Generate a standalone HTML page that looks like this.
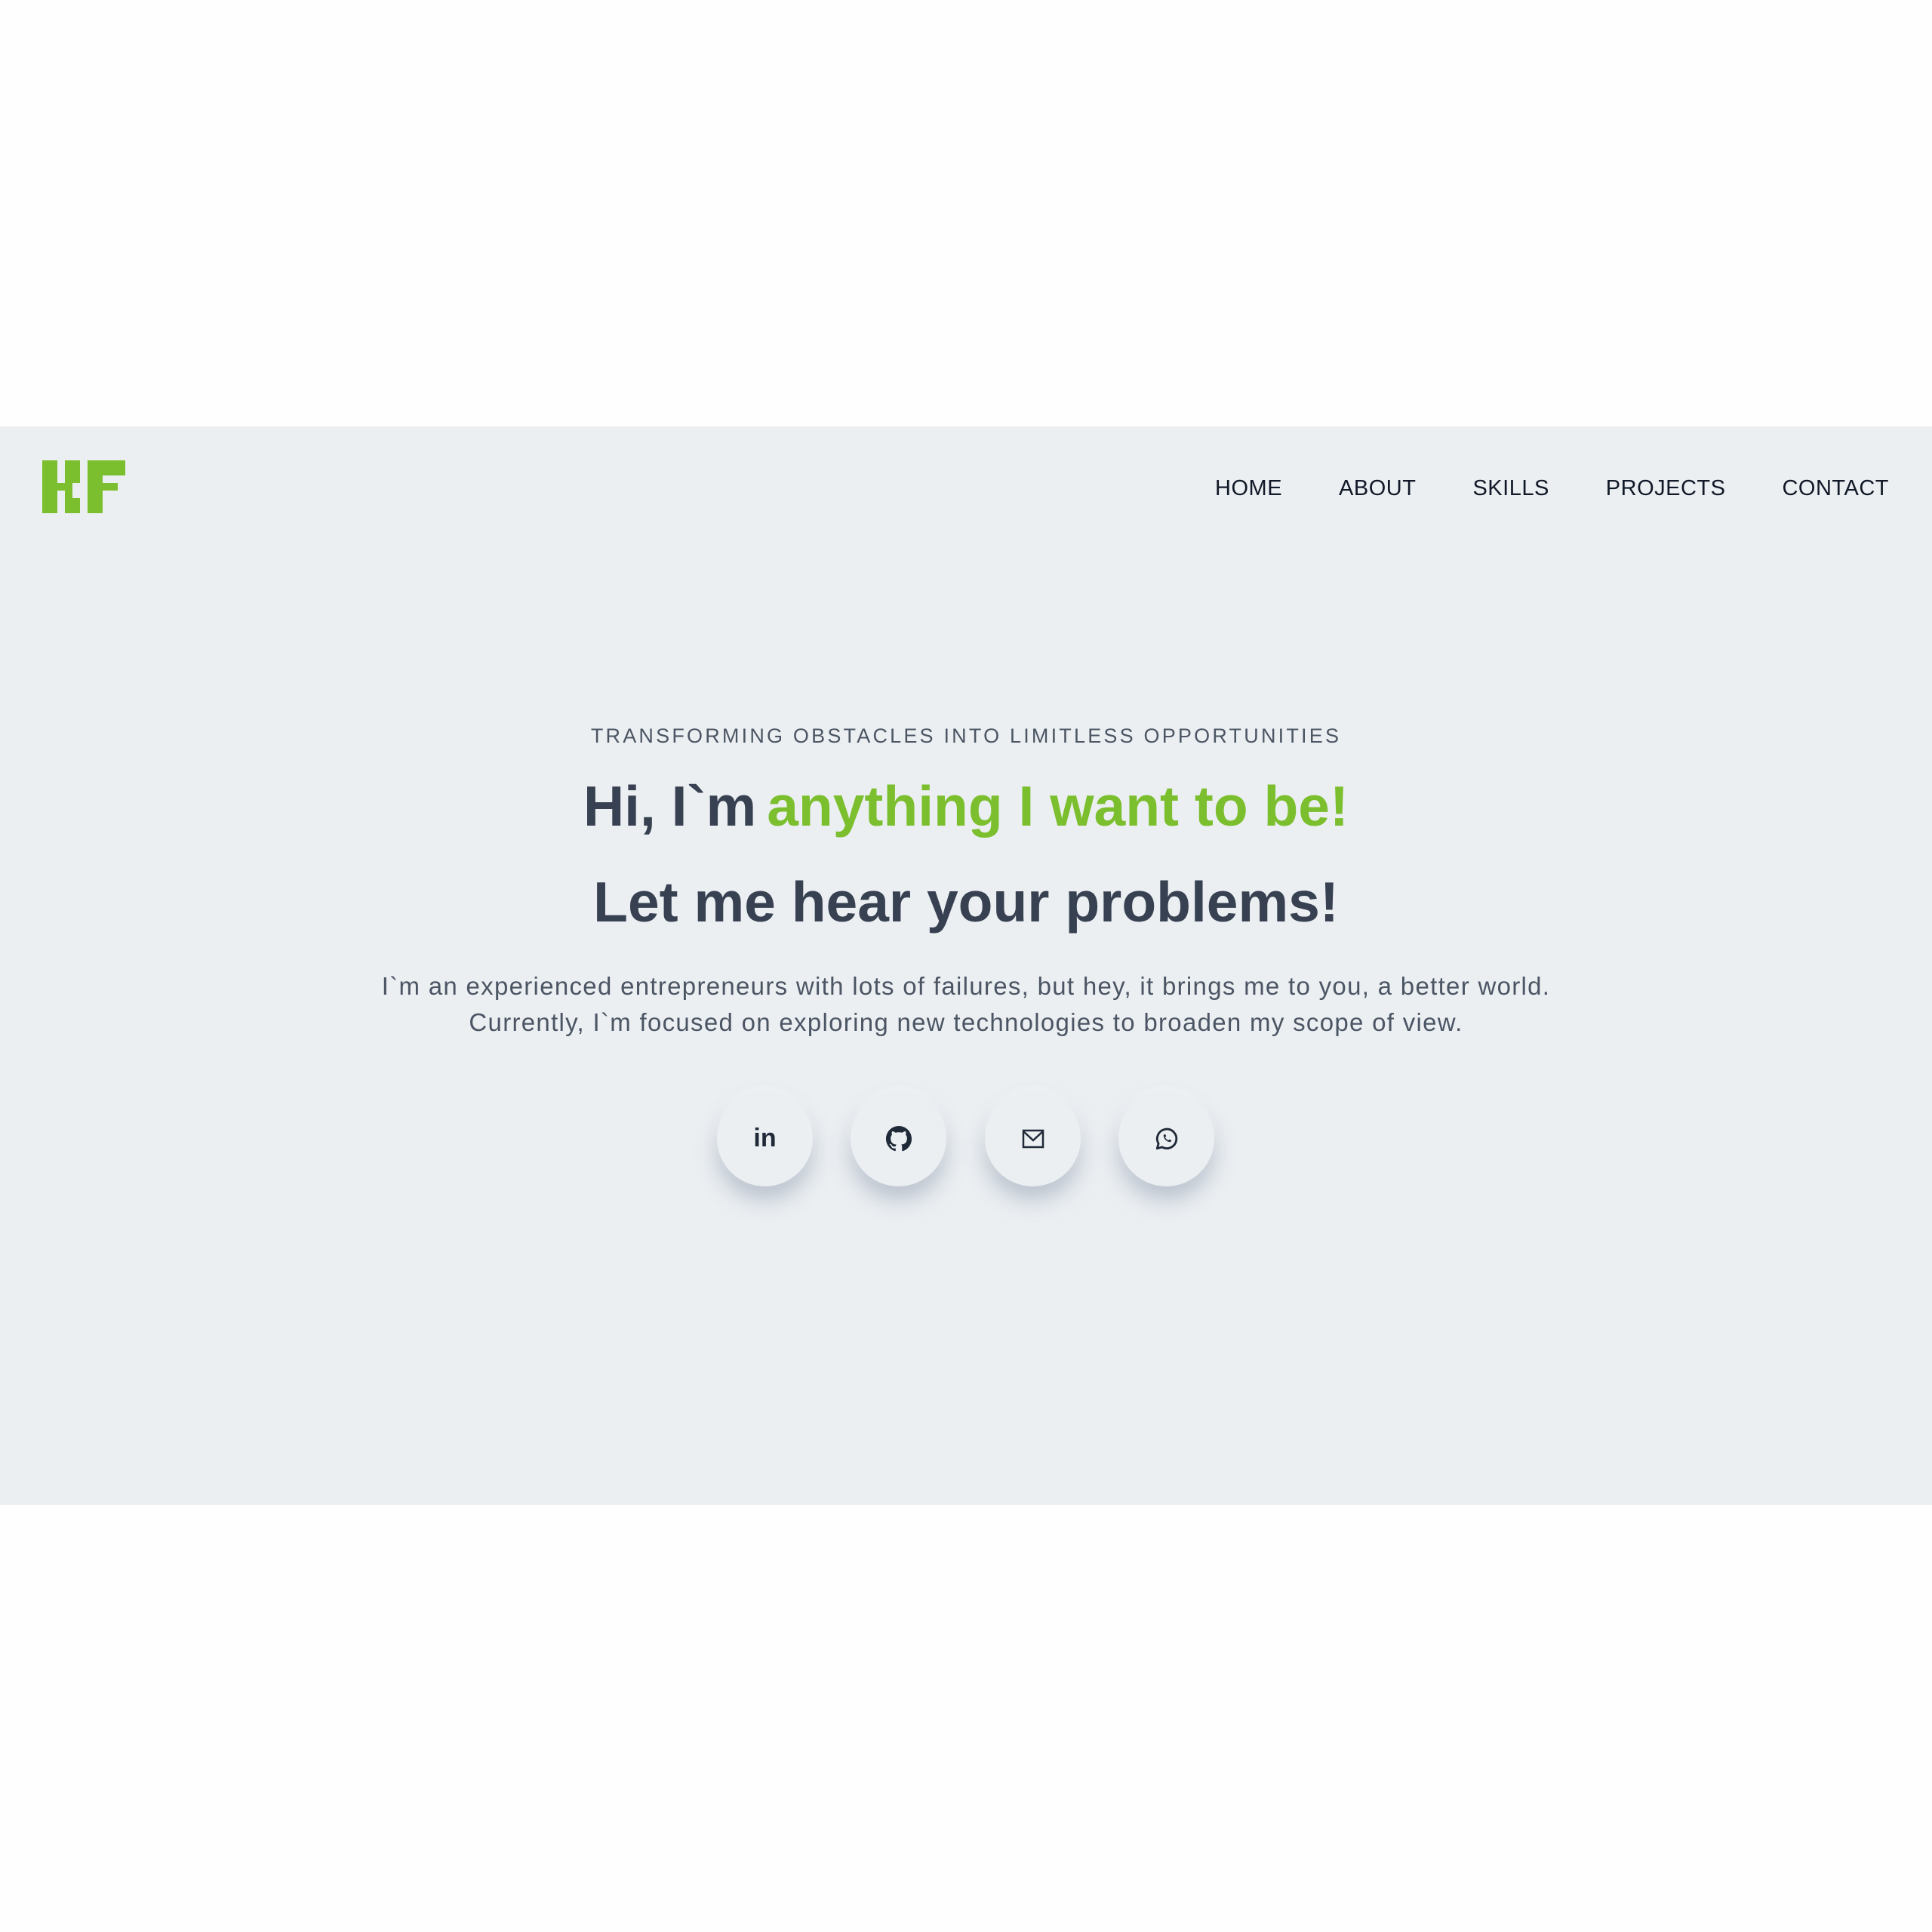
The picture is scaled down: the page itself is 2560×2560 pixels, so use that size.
<!DOCTYPE html>
<html><head><meta charset="utf-8"><style>
*{margin:0;padding:0;box-sizing:border-box}
body{width:2560px;height:2560px;background:#fefefe;font-family:"Liberation Sans",sans-serif;position:relative;overflow:hidden}
.band{position:absolute;left:0;top:565px;width:2560px;height:1429px;background:#ebeff2}
.logo{position:absolute;left:0;top:0}
.logo div{position:absolute;background:#7cbf2e}
nav{position:absolute;top:631px;right:57px;display:flex;gap:75px;font-size:29px;color:#111827;letter-spacing:.5px}
.c{position:absolute;left:0;width:2560px;text-align:center;color:#374151}
.sub{top:960px;font-size:27px;letter-spacing:3.2px;color:#4b5563}
.h1{top:1025px;font-size:75px;font-weight:bold}
.h1 span{color:#7cbf2e;margin-left:14px}
.h2{top:1152px;font-size:75px;font-weight:bold}
.p{top:1283px;font-size:33px;line-height:48px;color:#4b5563;letter-spacing:1.3px}
.ic{position:absolute;top:1445px;width:127px;height:127px;border-radius:50%;background:#ebeff2;box-shadow:0 18px 28px rgba(100,115,140,.35),0 -2px 10px rgba(255,255,255,.6);display:flex;align-items:center;justify-content:center}
</style></head><body>
<div class="band"></div>
<div class="logo">
<div style="left:56px;top:610px;width:20px;height:70px"></div>
<div style="left:86px;top:610px;width:20px;height:30px"></div>
<div style="left:76px;top:640px;width:20px;height:10px"></div>
<div style="left:86px;top:650px;width:10px;height:30px"></div>
<div style="left:96px;top:660px;width:10px;height:20px"></div>
<div style="left:116px;top:610px;width:20px;height:70px"></div>
<div style="left:116px;top:610px;width:50px;height:20px"></div>
<div style="left:116px;top:640px;width:40px;height:10px"></div>
</div>
<nav><span>HOME</span><span>ABOUT</span><span>SKILLS</span><span>PROJECTS</span><span>CONTACT</span></nav>
<div class="c sub">TRANSFORMING OBSTACLES INTO LIMITLESS OPPORTUNITIES</div>
<div class="c h1">Hi, I`m<span>anything I want to be!</span></div>
<div class="c h2">Let me hear your problems!</div>
<div class="c p">I`m an experienced entrepreneurs with lots of failures, but hey, it brings me to you, a better world.<br>Currently, I`m focused on exploring new technologies to broaden my scope of view.</div>
<div class="ic" style="left:950px"><span style="font-weight:bold;font-size:34px;color:#1f2937">in</span></div>
<div class="ic" style="left:1127px"><svg width="34" height="34" viewBox="0 0 16 16"><path fill="#1f2937" d="M8 0C3.58 0 0 3.580 0 8c0 3.54 2.29 6.53 5.47 7.59.4.07.55-.17.55-.38v-1.330c-2.23.48-2.7-1.070-2.7-1.07-.36-.92-.89-1.17-.89-1.17-.73-.5.05-.49.05-.49.8.06 1.23.83 1.23.83.71 1.23 1.87.87 2.33.66.07-.52.28-.87.51-1.07-1.78-.2-3.64-.89-3.64-3.95 0-.87.31-1.59.82-2.15-.08-.2-.36-1.02.08-2.12 0 0 .67-.21 2.2.82a7.6 7.6 0 0 1 4 0c1.53-1.04 2.2-.82 2.2-.82.44 1.1.16 1.92.08 2.12.51.56.82 1.27.82 2.15 0 3.07-1.87 3.75-3.65 3.95.29.25.54.73.54 1.48v2.2c0 .21.15.46.55.38A8 8 0 0 0 16 8c0-4.42-3.58-8-8-8z"/></svg></div>
<div class="ic" style="left:1305px"><svg width="30" height="28" viewBox="0 0 30 28"><rect x="2" y="3" width="26" height="22" fill="none" stroke="#1f2937" stroke-width="2.5"/><path d="M2 4l13 12L28 4" fill="none" stroke="#1f2937" stroke-width="2.5"/></svg></div>
<div class="ic" style="left:1482px"><svg width="34" height="34" viewBox="0 0 24 24"><path d="M3 21l1.3-4.5A9 9 0 1 1 7.7 19.8z" fill="none" stroke="#1f2937" stroke-width="2" stroke-linejoin="round"/><path d="M9 8.5c0 3 2.5 6.5 6.5 6.5l1-1.5-2-1-1 1c-1.3-.6-2.4-1.7-3-3l1-1-1-2L9 8.5z" fill="#1f2937"/></svg></div>
</body></html>
